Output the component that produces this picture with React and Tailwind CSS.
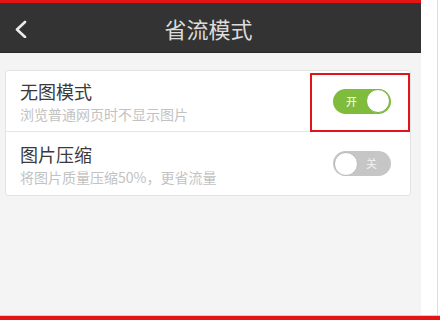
export default function App() {
  const font = { fontFamily: '"Noto Sans CJK SC", "Noto Sans", sans-serif' };
  return (
    <div className="w-[440px] h-[320px] flex flex-col bg-white overflow-hidden" style={font}>
      <div className="flex flex-1 min-h-0">
        <div className="w-[421px] flex flex-col">
          <div className="h-[3px] bg-[#e41414]" />
          <div className="h-[50px] bg-[#333333] relative flex items-center justify-center border-b border-[#2a2a2a]">
            <svg className="absolute left-[13px] top-[17px]" width="16" height="18" viewBox="0 0 16 18">
              <path d="M12 2 L4 9.5 L12 17" fill="none" stroke="#ececec" strokeWidth="2.6" strokeLinecap="round" strokeLinejoin="round" />
            </svg>
            <span className="text-[22px] leading-[26px] text-[#dcdcdc] ml-[-4px]">省流模式</span>
          </div>
          <div className="flex-1 bg-[#f4f4f4] pt-[17px] pl-[5px] pr-[10px]">
            <div className="relative bg-white border border-[#e3e3e3] rounded-[3px]">
              <div className="flex items-center justify-between pl-[14px] pr-[19px] h-[61px] border-b border-[#e6e6e6]">
                <div className="flex flex-col">
                  <span className="text-[18px] leading-[22px] text-[#3a3a3a]">无图模式</span>
                  <span className="text-[14px] leading-[18px] text-[#c2c2c2] mt-[3px]">浏览普通网页时不显示图片</span>
                </div>
                <div className="w-[58px] h-[25px] rounded-full bg-[#80bc3c] flex items-center justify-between pl-[13px] pr-[1px]">
                  <span className="text-[11px] leading-none text-white">开</span>
                  <div className="w-[24px] h-[24px] rounded-full bg-white border border-[#7aae43]" />
                </div>
              </div>
              <div className="flex items-center justify-between pl-[14px] pr-[19px] h-[63px]">
                <div className="flex flex-col pt-[1px]">
                  <span className="text-[18px] leading-[22px] text-[#3a3a3a]">图片压缩</span>
                  <span className="text-[14px] leading-[18px] text-[#c2c2c2] mt-[3px]">将图片质量压缩50%，更省流量</span>
                </div>
                <div className="w-[58px] h-[25px] rounded-full bg-[#c6c6c6] flex items-center justify-between pl-[1px] pr-[14px]">
                  <div className="w-[24px] h-[24px] rounded-full bg-white border border-[#b8b8b8]" />
                  <span className="text-[11px] leading-none text-[#f2f2f2]">关</span>
                </div>
              </div>
              <div className="absolute left-[304px] top-[2px] w-[100px] h-[59px] border-2 border-[#e0141b]" />
            </div>
          </div>
        </div>
        <div className="flex-1 bg-white flex">
          <div className="flex-1 mr-[2px] border-r border-[#dedede]" />
        </div>
      </div>
      <div className="h-[1px] bg-[#f5c0c0]" />
      <div className="h-[4px] bg-[#e41414]" />
    </div>
  );
}
